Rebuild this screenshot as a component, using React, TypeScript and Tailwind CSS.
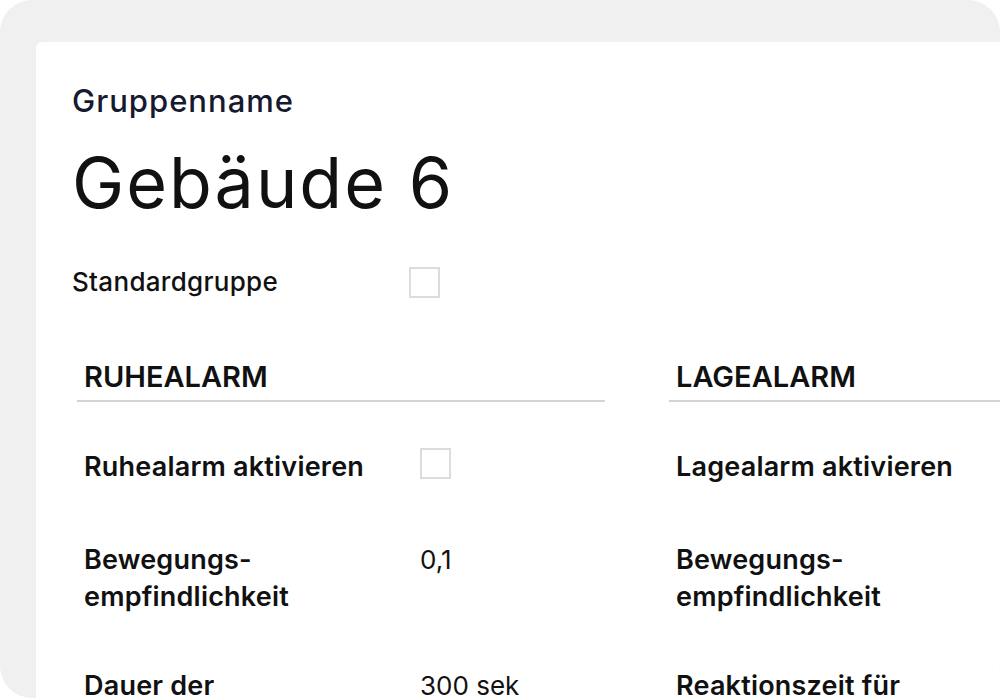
type Row = { label: string[]; value?: string; checkbox?: boolean; gap: string };

const ruhe: Row[] = [
  { label: ["Ruhealarm aktivieren"], checkbox: true, gap: "mt-0" },
  { label: ["Bewegungs-", "empfindlichkeit"], value: "0,1", gap: "mt-[56px]" },
  { label: ["Dauer der", "Ruhephase"], value: "300 sek", gap: "mt-[52px]" },
];

const lage: Row[] = [
  { label: ["Lagealarm aktivieren"], gap: "mt-0" },
  { label: ["Bewegungs-", "empfindlichkeit"], gap: "mt-[56px]" },
  { label: ["Reaktionszeit für", "Lagealarm"], gap: "mt-[52px]" },
];

function Checkbox(props: { className?: string }) {
  return <div className={"h-[31px] w-[31px] border-2 border-[#dcdcdc] bg-white " + (props.className ?? "")} />;
}

function Section(props: { title: string; rows: Row[]; width: string }) {
  return (
    <section className={props.width + " shrink-0"}>
      <h2 className="border-b-2 border-[#d4d4d4] pb-[6px] pl-[7px] text-[29px] font-semibold leading-[34px] text-[#111]">
        {props.title}
      </h2>
      <div className="flex flex-col pl-[7px] pt-[46px]">
        {props.rows.map((row) => (
          <div key={row.label.join(" ")} className={"flex items-start " + row.gap}>
            <div className="w-[336px] text-[27px] font-semibold leading-[37px] tracking-[0.2px] text-[#111]">
              {row.label.map((line) => (
                <div key={line}>{line}</div>
              ))}
            </div>
            {row.checkbox ? <Checkbox /> : null}
            {row.value ? (
              <div className="text-[26px] leading-[37px] text-[#111]">{row.value}</div>
            ) : null}
          </div>
        ))}
      </div>
    </section>
  );
}

export default function App() {
  return (
    <div className="h-[698px] w-[1000px] overflow-hidden bg-white" style={{ fontFamily: "Inter, 'Noto Sans', sans-serif" }}>
      <div className="flex h-full w-full overflow-hidden rounded-[32px] bg-[#f0f0f0] pl-[36px] pt-[42px]">
        <main className="h-[700px] w-[1000px] shrink-0 rounded-tl-[6px] bg-white pl-[36px] pt-[41px]">
          <p className="text-[31px] font-medium leading-[36px] tracking-[1px] text-[#161a2e]">Gruppenname</p>
          <h1 className="mt-[24px] text-[70px] font-normal leading-[80px] tracking-[2px] text-[#111]">Gebäude 6</h1>
          <div className="mt-[43px] flex items-center">
            <span className="w-[337px] text-[26px] font-medium leading-[32px] tracking-[0.3px] text-[#111]">Standardgruppe</span>
            <Checkbox />
          </div>
          <div className="ml-[5px] mt-[62px] flex gap-[64px]">
            <Section title="RUHEALARM" rows={ruhe} width="w-[528px]" />
            <Section title="LAGEALARM" rows={lage} width="w-[400px]" />
          </div>
        </main>
      </div>
    </div>
  );
}
